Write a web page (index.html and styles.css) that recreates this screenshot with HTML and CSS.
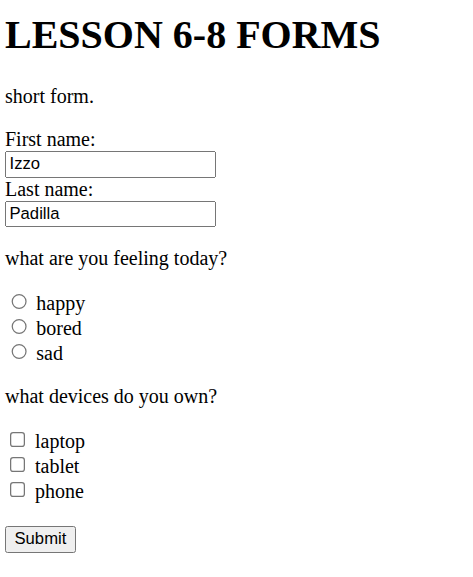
FILE: index.html
```html
<!DOCTYPE html>
<html>
<head>
<meta charset="utf-8">
<title>Lesson 6-8 Forms</title>
<link rel="stylesheet" href="styles.css">
</head>
<body>
<div class="page">
<h1 class="title">LESSON 6-8 FORMS</h1>
<p>short form.</p>
<form class="form">
  <label for="fname">First name:</label><br>
  <input class="text" type="text" id="fname" name="fname" value="Izzo"><br>
  <label for="lname">Last name:</label><br>
  <input class="text" type="text" id="lname" name="lname" value="Padilla">
  <p>what are you feeling today?</p>
  <input class="choice" type="radio" id="happy" name="feel" value="happy"> <label for="happy">happy</label><br>
  <input class="choice" type="radio" id="bored" name="feel" value="bored"> <label for="bored">bored</label><br>
  <input class="choice" type="radio" id="sad" name="feel" value="sad"> <label for="sad">sad</label>
  <p>what devices do you own?</p>
  <input class="choice" type="checkbox" id="laptop" name="dev1" value="laptop"> <label for="laptop">laptop</label><br>
  <input class="choice" type="checkbox" id="tablet" name="dev2" value="tablet"> <label for="tablet">tablet</label><br>
  <input class="choice" type="checkbox" id="phone" name="dev3" value="phone"> <label for="phone">phone</label><br><br>
  <input class="submit" type="submit" value="Submit">
</form>
</div>
</body>
</html>
```
FILE: styles.css
```css
html, body {
  margin: 0;
  padding: 0;
  background: #ffffff;
}
.page {
  zoom: 1.25;
  padding: 0 4px;
  font-family: "Liberation Serif", "Times New Roman", serif;
  font-size: 16px;
  color: #000;
}
.title {
  font-size: 32px;
  font-weight: bold;
  margin: 9px 0 21.44px;
}
.text, .submit {
  font-family: "Liberation Sans", Arial, sans-serif;
  font-size: 13.333px;
}
.text {
  width: 161.6px;
}
```
